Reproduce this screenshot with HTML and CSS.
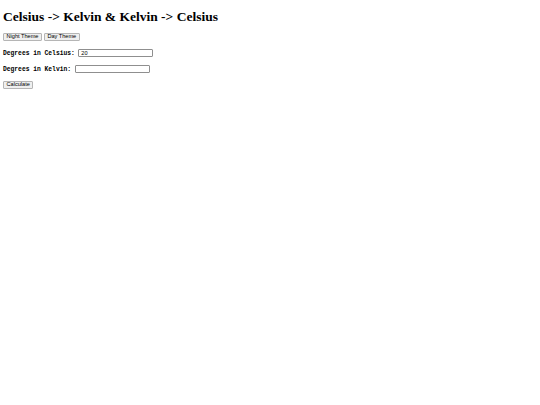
FILE: index.html
```html
<!DOCTYPE html>
<html lang="en">
<head>
    <meta charset="UTF-8">
    <meta name="viewport" content="width=device-width, initial-scale=1.0">
    <title>Temperature Converter</title>
    <link rel="stylesheet" href="styles.css">
</head>
<body>
    <h1>Celsius -&gt; Kelvin &amp; Kelvin -&gt; Celsius</h1>

    <!-- Theme switch -->
    <div class="themes">
        <button class="btn" onclick="setTheme('night')">Night Theme</button>
        <button class="btn" onclick="setTheme('day')">Day Theme</button>
    </div>

    <!-- Converter -->
    <div class="row">
        <label class="label" for="celsius">Degrees in Celsius:</label>
        <input class="field" type="text" id="celsius" value="20">
    </div>
    <div class="row">
        <label class="label" for="kelvin">Degrees in Kelvin:</label>
        <input class="field" type="text" id="kelvin">
    </div>
    <div class="row">
        <button class="btn" onclick="calculate()">Calculate</button>
    </div>

    <script>
        const celsius = document.getElementById('celsius');
        const kelvin = document.getElementById('kelvin');

        function setTheme(name) {
            document.body.className = name === 'night' ? 'night' : '';
        }

        // Fill whichever box is empty
        function calculate() {
            if (celsius.value !== '') {
                kelvin.value = (parseFloat(celsius.value) + 273.15).toFixed(2);
            } else if (kelvin.value !== '') {
                celsius.value = (parseFloat(kelvin.value) - 273.15).toFixed(2);
            }
        }
    </script>
</body>
</html>
```

FILE: styles.css
```css
body {
    margin: 0;
    padding: 3px;
    font-family: "Liberation Serif", serif;
    background: #fff;
    color: #000;
}
body.night {
    background: #222;
    color: #eee;
}
h1 {
    font-size: 13.5px;
    margin: 6px 0 8px;
}
.themes {
    display: flex;
    gap: 2px;
}
.btn {
    box-sizing: border-box;
    height: 8px;
    font-family: "Liberation Sans", Arial, sans-serif;
    font-size: 5.6px;
    line-height: 1;
    padding: 0 2.5px;
    color: #000;
    background: #efefef;
    border: 1px solid #b5b5b5;
    border-radius: 1px;
}
.row {
    display: flex;
    align-items: center;
    gap: 3.5px;
    margin-top: 8px;
}
.label {
    font-family: "Liberation Mono", monospace;
    font-weight: bold;
    font-size: 6.3px;
}
.field {
    box-sizing: border-box;
    width: 75px;
    height: 8px;
    padding: 0 2px;
    font-family: "Liberation Sans", Arial, sans-serif;
    font-size: 5.6px;
    border: 1px solid #8f8f8f;
    border-radius: 1px;
}
```
